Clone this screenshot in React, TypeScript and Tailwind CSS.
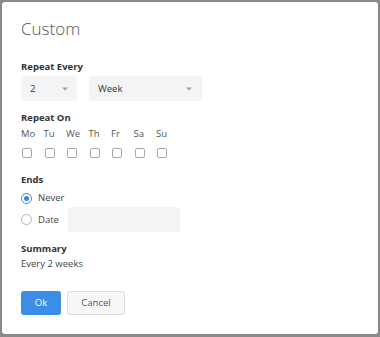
import React from "react";

const days = ["Mo", "Tu", "We", "Th", "Fr", "Sa", "Su"];

function Caret() {
  return (
    <svg width="6" height="4" viewBox="0 0 6 4" className="shrink-0">
      <path d="M0 0.5 L6 0.5 L3 3.5 Z" fill="#a0a0a0" />
    </svg>
  );
}

export default function App() {
  return (
    <div
      className="w-[380px] h-[337px] bg-[#8a8a8a] pl-[2px] pt-[2px] pr-[2px] pb-[3px]"
      style={{ fontFamily: '"Open Sans", "Noto Sans", sans-serif' }}
    >
      <div className="w-full h-full bg-white rounded-[3px] pl-[19px] pt-[15px] text-[9.5px] leading-[16px] text-[#333]">
        <div className="text-[17px] leading-[24px] font-light text-[#555]">Custom</div>

        <div className="mt-[18px] font-bold text-[#333]">Repeat Every</div>
        <div className="mt-[1px] flex gap-[12px]">
          <div className="w-[56px] h-[25px] bg-[#f3f4f6] rounded-[3px] flex items-center justify-between pl-[9px] pr-[9px] text-[#333]">
            <span>2</span>
            <Caret />
          </div>
          <div className="w-[113px] h-[25px] bg-[#f3f4f6] rounded-[3px] flex items-center justify-between pl-[9px] pr-[10px] text-[#333]">
            <span>Week</span>
            <Caret />
          </div>
        </div>

        <div className="mt-[9px] font-bold">Repeat On</div>
        <div className="flex">
          {days.map((d) => (
            <div key={d} className="w-[22.5px] text-[#555]">
              {d}
            </div>
          ))}
        </div>
        <div className="mt-[6px] flex">
          {days.map((d) => (
            <div key={d} className="w-[22.5px]">
              <div className="ml-[1px] w-[10px] h-[10px] border border-[#a8a8a8] rounded-[2px] bg-white" />
            </div>
          ))}
        </div>

        <div className="mt-[14px] font-bold">Ends</div>
        <div className="mt-[2px] h-[16px] flex items-center gap-[6px]">
          <div className="w-[11px] h-[11px] rounded-full border border-[#2d8cf0] flex items-center justify-center">
            <div className="w-[5px] h-[5px] rounded-full bg-[#2d8cf0]" />
          </div>
          <span className="text-[#444]">Never</span>
        </div>
        <div className="mt-[1px] h-[25px] flex items-center">
          <div className="w-[11px] h-[11px] rounded-full border border-[#b5b5b5]" />
          <span className="ml-[6px] text-[#444] w-[30px]">Date</span>
          <div className="w-[112px] h-[25px] bg-[#f3f4f6] rounded-[3px]" />
        </div>

        <div className="mt-[9px] font-bold">Summary</div>
        <div className="-mt-[1px] text-[#444]">Every 2 weeks</div>

        <div className="mt-[19px] flex gap-[6px]">
          <button className="w-[40px] h-[24px] bg-[#3a8ee6] rounded-[3px] text-white text-[9.5px]">Ok</button>
          <button className="w-[58px] h-[24px] bg-[#f7f7f7] border border-[#dcdcdc] rounded-[3px] text-[#555] text-[9.5px]">
            Cancel
          </button>
        </div>
      </div>
    </div>
  );
}
